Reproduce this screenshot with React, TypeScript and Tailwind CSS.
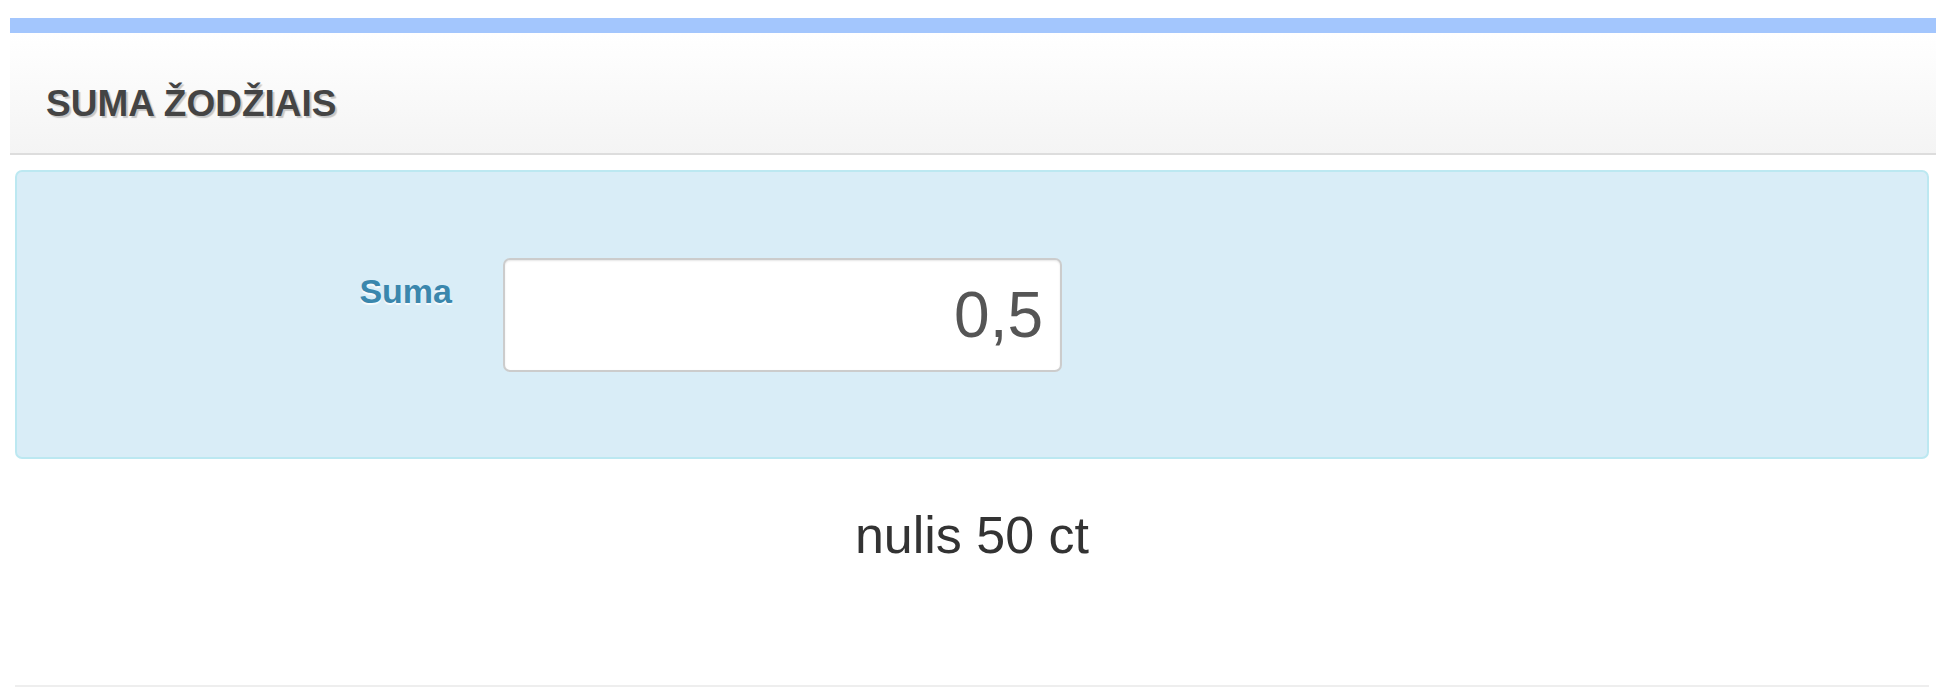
import React from "react";

export default function App() {
  return (
    <div className="h-[694px] overflow-hidden bg-white pt-[18px] pl-[10px] font-['Liberation_Sans',Arial,sans-serif]">
      <div className="h-[15px] bg-[#a3c6fd]" />
      <div className="h-[122px] border-b-2 border-[#dddddd] bg-gradient-to-b from-white to-[#f4f4f4] pl-[36px] pt-[52px]">
        <h1 className="text-[37px] font-bold leading-none text-[#444444] [text-shadow:2px_2px_1px_rgba(0,0,0,0.2)]">
          SUMA ŽODŽIAIS
        </h1>
      </div>
      <div className="ml-[5px] mr-[7px]">
        <div className="mt-[15px] box-border flex h-[289px] items-start rounded-[7px] border-2 border-[#bce8f1] bg-[#d9edf7] pt-[86px]">
          <label className="block w-[435px] pt-[16px] text-right text-[34px] font-bold leading-none text-[#3a87ad] [text-shadow:0_2px_1px_rgba(255,255,255,0.8)]">
            Suma
          </label>
          <input
            className="ml-[51px] box-border h-[114px] w-[559px] rounded-[7px] border-2 border-[#cccccc] bg-white pr-[17px] text-right text-[64px] text-[#555555] shadow-[inset_0_1px_2px_rgba(0,0,0,0.1)] outline-none font-['Liberation_Sans',Arial,sans-serif]"
            defaultValue="0,5"
          />
        </div>
        <div className="mt-[46px] text-center text-[52px] leading-[60px] text-[#333333]">
          nulis 50 ct
        </div>
        <div className="mt-[120px] h-[2px] bg-[#eeeeee]" />
      </div>
    </div>
  );
}
